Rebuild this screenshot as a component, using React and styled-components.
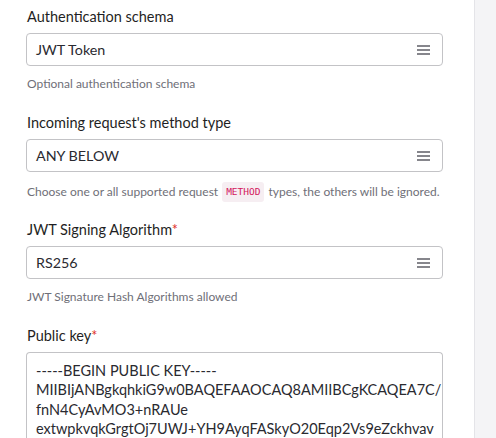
import styled, { createGlobalStyle } from "styled-components";

const GlobalStyle = createGlobalStyle`
  html, body {
    margin: 0;
    padding: 0;
    background: #fff;
  }
  body {
    font-family: Lato, "Open Sans", sans-serif;
    overflow: hidden;
  }
`;

const Page = styled.div`
  display: flex;
  width: 496px;
  height: 438px;
  overflow: hidden;
`;

const Main = styled.div`
  width: 474px;
  flex-shrink: 0;
  padding: 7px 31px 0 26px;
  box-sizing: border-box;
  display: flex;
  flex-direction: column;
`;

const Side = styled.div`
  flex: 1;
  background: #f4f4f6;
  border-left: 1px solid #e4e4e8;
`;

const Field = styled.div`
  display: flex;
  flex-direction: column;
  margin-bottom: ${(p) => p.$gap || 0}px;
`;

const Label = styled.label`
  font-size: 14.5px;
  color: #1f1f24;
  line-height: 20px;
  margin-bottom: 6px;
  padding-left: 1px;
`;

const Star = styled.span`
  color: #e0312b;
`;

const Select = styled.div`
  height: 33px;
  border: 1px solid #c3c3c6;
  border-radius: 4px;
  box-sizing: border-box;
  display: flex;
  align-items: center;
  justify-content: space-between;
  padding: 0 12px 0 9px;
  font-size: 14.3px;
  color: #2a2a30;
`;

const Hint = styled.div`
  font-size: 12px;
  color: #6f6f78;
  line-height: 16px;
  margin-top: 10px;
  padding-left: 1px;
  display: flex;
  align-items: center;
  white-space: nowrap;
`;

const Code = styled.code`
  font-family: "DejaVu Sans Mono", monospace;
  font-size: 9.5px;
  color: #d3165c;
  background: #f6eef2;
  border-radius: 3px;
  padding: 2px 4px;
  margin: 0 4px;
`;

const TextArea = styled.div`
  border: 1px solid #c3c3c6;
  border-bottom: none;
  border-radius: 4px 4px 0 0;
  padding: 8px 9px 0;
  font-size: 14.5px;
  line-height: 19.3px;
  color: #2a2a30;
  height: 90px;
  overflow: hidden;
  white-space: nowrap;
`;

function MenuIcon() {
  return (
    <svg width="13" height="10" viewBox="0 0 13 10">
      <rect x="0" y="0" width="13" height="2" fill="#86868c" />
      <rect x="0" y="4" width="13" height="2" fill="#86868c" />
      <rect x="0" y="8" width="13" height="2" fill="#86868c" />
    </svg>
  );
}

const keyLines = [
  "-----BEGIN PUBLIC KEY-----",
  "MIIBIjANBgkqhkiG9w0BAQEFAAOCAQ8AMIIBCgKCAQEA7C/",
  "fnN4CyAvMO3+nRAUe",
  "extwpkvqkGrgtOj7UWJ+YH9AyqFASkyO20Eqp2Vs9eZckhvav",
];

function App() {
  return (
    <>
      <GlobalStyle />
      <Page>
        <Main>
          <Field $gap={21}>
            <Label>Authentication schema</Label>
            <Select>
              JWT Token
              <MenuIcon />
            </Select>
            <Hint>Optional authentication schema</Hint>
          </Field>
          <Field $gap={18}>
            <Label>Incoming request's method type</Label>
            <Select>
              ANY BELOW
              <MenuIcon />
            </Select>
            <Hint>
              Choose one or all supported request<Code>METHOD</Code>types, the
              others will be ignored.
            </Hint>
          </Field>
          <Field $gap={21}>
            <Label>
              JWT Signing Algorithm<Star>*</Star>
            </Label>
            <Select>
              RS256
              <MenuIcon />
            </Select>
            <Hint>JWT Signature Hash Algorithms allowed</Hint>
          </Field>
          <Field>
            <Label>
              Public key<Star>*</Star>
            </Label>
            <TextArea>
              {keyLines.map((l, i) => (
                <div key={i}>{l}</div>
              ))}
            </TextArea>
          </Field>
        </Main>
        <Side />
      </Page>
    </>
  );
}

export default App;
